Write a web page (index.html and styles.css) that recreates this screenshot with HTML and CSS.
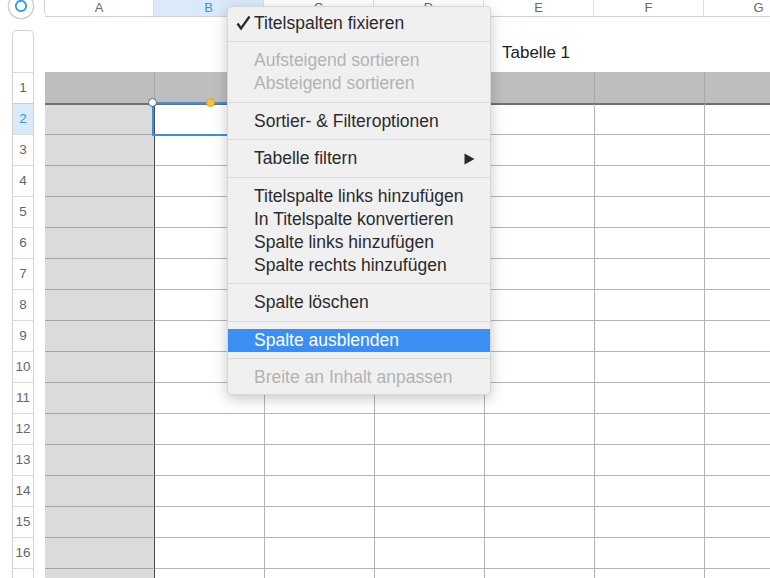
FILE: index.html
```html
<!DOCTYPE html>
<html lang="de">
<head>
<meta charset="utf-8">
<title>Tabelle 1</title>
<link rel="stylesheet" href="styles.css">
</head>
<body>
<div class="top">
  <div class="corner">
    <svg class="ring" width="28" height="28" viewBox="0 0 28 28"><circle cx="14" cy="14" r="12.6" fill="#fff" stroke="#cfcfcf" stroke-width="1.4"/><circle cx="14" cy="14" r="5.2" fill="none" stroke="#2f9ae8" stroke-width="1.8"/></svg>
  </div>
  <div class="colhead">
    <div class="ch first">A</div>
    <div class="ch active">B</div>
    <div class="ch">C</div>
    <div class="ch">D</div>
    <div class="ch">E</div>
    <div class="ch">F</div>
    <div class="ch">G</div>
  </div>
</div>
<div class="area">
  <div class="rowhead">
    <div class="rh-top"></div>
    <div class="rh">1</div>
    <div class="rh active">2</div>
    <div class="rh">3</div>
    <div class="rh">4</div>
    <div class="rh">5</div>
    <div class="rh">6</div>
    <div class="rh">7</div>
    <div class="rh">8</div>
    <div class="rh">9</div>
    <div class="rh">10</div>
    <div class="rh">11</div>
    <div class="rh">12</div>
    <div class="rh">13</div>
    <div class="rh">14</div>
    <div class="rh">15</div>
    <div class="rh">16</div>
    <div class="rh">17</div>
  </div>
  <div class="main">
    <div class="title">Tabelle 1</div>
    <div class="table">
      <div class="tr head"><div class="td hc"></div><div class="td"></div><div class="td"></div><div class="td"></div><div class="td"></div><div class="td"></div><div class="td"></div></div>
      <div class="tr first"><div class="td hc"></div><div class="td"></div><div class="td"></div><div class="td"></div><div class="td"></div><div class="td"></div><div class="td"></div></div>
      <div class="tr"><div class="td hc"></div><div class="td"></div><div class="td"></div><div class="td"></div><div class="td"></div><div class="td"></div><div class="td"></div></div>
      <div class="tr"><div class="td hc"></div><div class="td"></div><div class="td"></div><div class="td"></div><div class="td"></div><div class="td"></div><div class="td"></div></div>
      <div class="tr"><div class="td hc"></div><div class="td"></div><div class="td"></div><div class="td"></div><div class="td"></div><div class="td"></div><div class="td"></div></div>
      <div class="tr"><div class="td hc"></div><div class="td"></div><div class="td"></div><div class="td"></div><div class="td"></div><div class="td"></div><div class="td"></div></div>
      <div class="tr"><div class="td hc"></div><div class="td"></div><div class="td"></div><div class="td"></div><div class="td"></div><div class="td"></div><div class="td"></div></div>
      <div class="tr"><div class="td hc"></div><div class="td"></div><div class="td"></div><div class="td"></div><div class="td"></div><div class="td"></div><div class="td"></div></div>
      <div class="tr"><div class="td hc"></div><div class="td"></div><div class="td"></div><div class="td"></div><div class="td"></div><div class="td"></div><div class="td"></div></div>
      <div class="tr"><div class="td hc"></div><div class="td"></div><div class="td"></div><div class="td"></div><div class="td"></div><div class="td"></div><div class="td"></div></div>
      <div class="tr"><div class="td hc"></div><div class="td"></div><div class="td"></div><div class="td"></div><div class="td"></div><div class="td"></div><div class="td"></div></div>
      <div class="tr"><div class="td hc"></div><div class="td"></div><div class="td"></div><div class="td"></div><div class="td"></div><div class="td"></div><div class="td"></div></div>
      <div class="tr"><div class="td hc"></div><div class="td"></div><div class="td"></div><div class="td"></div><div class="td"></div><div class="td"></div><div class="td"></div></div>
      <div class="tr"><div class="td hc"></div><div class="td"></div><div class="td"></div><div class="td"></div><div class="td"></div><div class="td"></div><div class="td"></div></div>
      <div class="tr"><div class="td hc"></div><div class="td"></div><div class="td"></div><div class="td"></div><div class="td"></div><div class="td"></div><div class="td"></div></div>
      <div class="tr"><div class="td hc"></div><div class="td"></div><div class="td"></div><div class="td"></div><div class="td"></div><div class="td"></div><div class="td"></div></div>
      <div class="tr"><div class="td hc"></div><div class="td"></div><div class="td"></div><div class="td"></div><div class="td"></div><div class="td"></div><div class="td"></div></div>
    </div>
  </div>
</div>

<div class="sel"></div>
<div class="handle h-corner"></div>
<div class="handle h-mid"></div>

<div class="menu">
  <div class="item"><svg class="check" width="15" height="16" viewBox="0 0 15 16"><polyline points="1.5,8.5 5,13.5 13.5,1.5" fill="none" stroke="#2a2a2a" stroke-width="2.3" stroke-linejoin="miter"/></svg>Titelspalten fixieren</div>
  <div class="sep"></div>
  <div class="item dis">Aufsteigend sortieren</div>
  <div class="item dis">Absteigend sortieren</div>
  <div class="sep"></div>
  <div class="item">Sortier- &amp; Filteroptionen</div>
  <div class="sep"></div>
  <div class="item sub"><span>Tabelle filtern</span><svg width="11" height="12" viewBox="0 0 11 12"><polygon points="0.5,0.5 10.5,6 0.5,11.5" fill="#2a2a2a"/></svg></div>
  <div class="sep"></div>
  <div class="item">Titelspalte links hinzufügen</div>
  <div class="item">In Titelspalte konvertieren</div>
  <div class="item">Spalte links hinzufügen</div>
  <div class="item">Spalte rechts hinzufügen</div>
  <div class="sep"></div>
  <div class="item">Spalte löschen</div>
  <div class="sep"></div>
  <div class="item hl">Spalte ausblenden</div>
  <div class="sep"></div>
  <div class="item dis">Breite an Inhalt anpassen</div>
</div>
</body>
</html>
```
FILE: styles.css
```css
* { box-sizing: border-box; }
html, body {
  margin: 0;
  padding: 0;
}
body {
  width: 770px;
  height: 578px;
  overflow: hidden;
  background: #fff;
  font-family: "Liberation Sans", Arial, Helvetica, sans-serif;
  position: relative;
}

/* column header strip */
.top {
  display: flex;
  height: 17px;
}
.corner {
  width: 45px;
  flex: none;
}
.ring {
  display: block;
  margin-left: 7px;
  margin-top: -8px;
  position: relative;
  z-index: 2;
}
.colhead {
  display: flex;
  height: 17px;
  border-bottom: 1px solid #d2d2d2;
}
.ch {
  width: 110px;
  flex: none;
  height: 16px;
  line-height: 16px;
  text-align: center;
  font-size: 13px;
  color: #6a6a6a;
  border-right: 1px solid #dedede;
  background: #fff;
}
.ch.first {
  border-left: 1px solid #d2d2d2;
  border-bottom-left-radius: 5px;
  margin-left: -1px;
  width: 110px;
}
.ch.active {
  background: #dbeafb;
  color: #3a93e4;
}

/* body area */
.area {
  display: flex;
  margin-top: 13px;
}
.rowhead {
  width: 22px;
  margin-left: 12px;
  flex: none;
  border: 1px solid #d2d2d2;
  border-bottom: none;
  border-radius: 5px 5px 0 0;
  background: #fff;
}
.rh-top {
  height: 41px;
}
.rh {
  height: 31px;
  border-top: 1px solid #dadada;
  text-align: center;
  font-size: 13.5px;
  line-height: 30px;
  color: #666;
}
.rh.active {
  background: #dbeafb;
  color: #3a93e4;
  border-top-color: #b9d4f0;
}

.main {
  margin-left: 11px;
  display: flex;
  flex-direction: column;
}
.title {
  height: 42px;
  padding-left: 457px;
  padding-top: 2px;
  line-height: 42px;
  font-size: 17px;
  color: #202020;
}
.table {
  display: flex;
  flex-direction: column;
}
.tr {
  display: flex;
  height: 31px;
}
.td {
  width: 110px;
  flex: none;
  height: 31px;
  border-top: 1px solid #b4b4b4;
  border-right: 1px solid #b4b4b4;
  background: #fff;
}
.td.hc {
  background: #dbdbdb;
  border-right: 1px solid #4c4c4c;
  border-top-color: #a3a3a3;
}
.tr.head .td {
  background: #bebebe;
  border-top: none;
  border-right-color: #a8a8a8;
}
.tr.first .td {
  border-top: 2px solid #707070;
}

/* selection overlay */
.sel {
  position: absolute;
  left: 152px;
  top: 102px;
  width: 116px;
  height: 34px;
  border: 2px solid #3b8fe3;
}
.handle {
  position: absolute;
  width: 9px;
  height: 9px;
  border-radius: 50%;
}
.h-corner {
  left: 147.5px;
  top: 98px;
  background: #fff;
  border: 1.5px solid #3f6a98;
}
.h-mid {
  left: 205.5px;
  top: 98px;
  background: #f6c23e;
  border: 1px solid #dca52a;
}

/* context menu */
.menu {
  position: absolute;
  left: 227px;
  top: 6px;
  width: 264px;
  padding: 4.5px 0;
  background: #f0f0f0;
  border: 1px solid rgba(0, 0, 0, 0.1);
  border-radius: 5px;
  box-shadow: 0 4px 14px rgba(0, 0, 0, 0.22);
  z-index: 5;
}
.item {
  position: relative;
  height: 23px;
  line-height: 23px;
  padding-left: 26px;
  font-size: 17.5px;
  color: #2b2b2b;
  white-space: nowrap;
}
.item.dis {
  color: #b3b3b3;
}
.item.hl {
  background: #3a8ef4;
  color: #fff;
}
.item.sub {
  display: flex;
  align-items: center;
  justify-content: space-between;
  padding-right: 15px;
}
.check {
  position: absolute;
  left: 8px;
  top: 3px;
}
.sep {
  height: 1px;
  margin: 6.75px 0;
  background: #d9d9d9;
}
```
